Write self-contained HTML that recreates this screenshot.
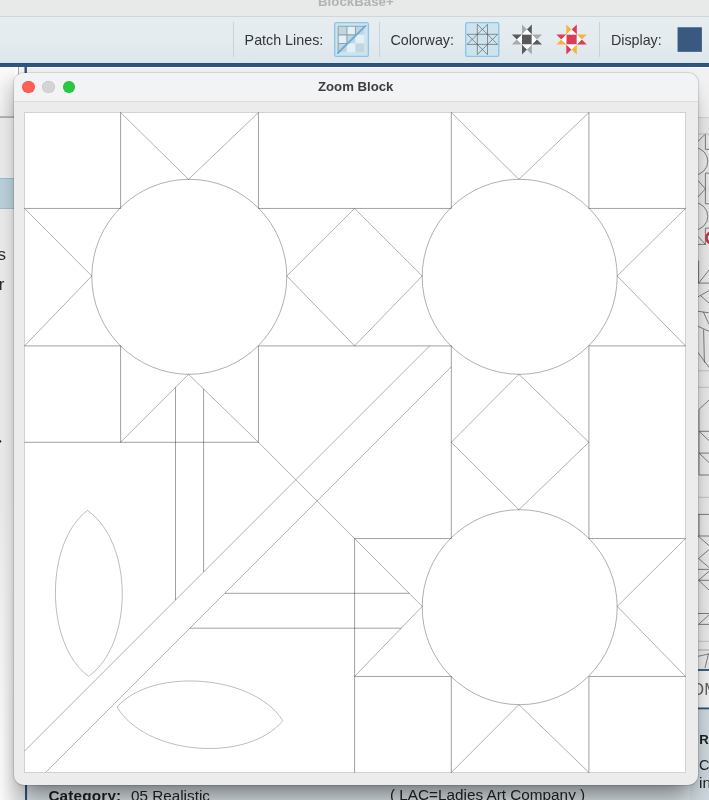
<!DOCTYPE html>
<html><head><meta charset="utf-8"><title>Zoom Block</title>
<style>
*{box-sizing:border-box;margin:0;padding:0}
html,body{width:709px;height:800px;overflow:hidden;background:#ececec;font-family:"Liberation Sans",sans-serif;color:#333}
.abs{position:absolute}
#titlestrip{left:0;top:0;width:709px;height:16px;background:#e8e9e9}
#apptitle{left:318px;top:-6.2px;font-size:13.3px;font-weight:bold;color:#b3b3b3;white-space:nowrap;line-height:15px}
#toolbar{left:0;top:16px;width:709px;height:47px;background:linear-gradient(#e6edf1,#e3ebef 55%,#dde6eb);border-top:1px solid #d1d6db}
#blueline{left:0;top:63px;width:709px;height:4px;background:linear-gradient(#284d75,#2f567f 40%)}
.sep{width:1px;top:22.3px;height:34.4px;background:#ccd3d8}
.lbl{font-size:14.3px;color:#353535;white-space:nowrap;line-height:16px;top:32.3px}
.btn{top:22.1px;width:34.8px;height:34.9px;border:1px solid #8cc3e8;background:#cde4ef;border-radius:1.5px}
#under{left:0;top:66.8px;width:709px;height:733.2px;background:#ededed}
#win{left:14px;top:73px;width:684px;height:711.5px;border-radius:10px;background:#ececec;box-shadow:0 0 0 1px rgba(0,0,0,0.10),0 1px 6px rgba(0,0,0,0.08),0 18px 25px -8px rgba(0,0,0,0.46);overflow:hidden}
#tbar{left:0;top:0;width:100%;height:29px;background:#f2f3f4;border-bottom:1px solid #dedede}
#wtitle{left:0;top:5.7px;width:100%;text-align:center;font-size:13.2px;font-weight:bold;color:#3d3d3d;line-height:15px;padding-right:0.6px}
.tl{top:7.7px;width:12.6px;height:12.6px;border-radius:50%}
#canvas{left:24px;top:112px;width:662px;height:661px;background:#fff;border:1px solid #d2d2d2}
svg.full{position:absolute;left:0;top:0;width:709px;height:800px;overflow:visible}
</style></head>
<body><div id="root" style="position:absolute;left:0;top:0;width:709px;height:800px;overflow:hidden;will-change:transform">
<div class="abs" id="titlestrip"></div>
<div class="abs" id="apptitle">BlockBase+</div>
<div class="abs" id="toolbar"></div>
<div class="abs sep" style="left:233.2px"></div>
<div class="abs lbl" style="left:244.6px">Patch Lines:</div>
<div class="abs sep" style="left:379.1px"></div>
<div class="abs lbl" style="left:390.4px">Colorway:</div>
<div class="abs sep" style="left:599.4px"></div>
<div class="abs lbl" style="left:610.9px">Display:</div>
<svg class="full" viewBox="0 0 709 800">
<rect x="334.7" y="22.7" width="33.7" height="33.7" rx="1.6" fill="#cde4ef" stroke="#8cc3e8" stroke-width="1.3"/>
<rect x="465.7" y="22.7" width="33.1" height="33.7" rx="1.6" fill="#cde4ef" stroke="#8cc3e8" stroke-width="1.3"/>
<rect x="338.2" y="26.2" width="8.7" height="8.7" fill="#c3d6dd"/>
<rect x="346.9" y="26.2" width="8.6" height="8.7" fill="#e2f1f7"/>
<rect x="355.5" y="26.2" width="8.7" height="8.7" fill="#c3d6dd"/>
<rect x="338.2" y="34.9" width="8.7" height="8.6" fill="#e2f1f7"/>
<rect x="346.9" y="34.9" width="8.6" height="8.6" fill="#c3d6dd"/>
<rect x="355.5" y="34.9" width="8.7" height="8.6" fill="#e2f1f7"/>
<rect x="338.2" y="43.5" width="8.7" height="8.7" fill="#c3d6dd"/>
<rect x="346.9" y="43.5" width="8.6" height="8.7" fill="#e2f1f7"/>
<rect x="355.5" y="43.5" width="8.7" height="8.7" fill="#c3d6dd"/>
<clipPath id="ul"><path d="M336 24H366.5L336 54.5Z"/></clipPath>
<path clip-path="url(#ul)" d="M338.2 26.2V52.2M346.9 26.2V52.2M355.5 26.2V52.2M338.2 26.2H364.2M338.2 34.9H364.2M338.2 43.5H364.2" stroke="#93a3aa" stroke-width="1.1" fill="none"/>
<path d="M337.9 53L365.5 25.9" stroke="#69ace0" stroke-width="1.9" stroke-linecap="round" fill="none"/>
<path d="M477.3 24.3V54.6M487.5 24.3V54.6M467.1 34.3H497.6M467.1 44.4H497.6M487.5 24.3L467.1 44.4M477.3 24.3L497.6 44.4M467.1 34.3L487.5 54.6M497.6 34.3L477.3 54.6" stroke="#4f4f4f" stroke-opacity="0.85" stroke-width="0.7" fill="none"/>
<rect x="522" y="34.4" width="9.8" height="10" fill="#58595b"/><path d="M522 24.5L522 34.4L526.9 29.45Z" fill="#a7a9ac"/><path d="M531.8 24.5L531.8 34.4L526.9 29.45Z" fill="#58595b"/><path d="M522 34.4L531.8 34.4L526.9 29.45Z" fill="#ffffff"/><path d="M511.8 34.4L522 34.4L516.9 39.4Z" fill="#58595b"/><path d="M511.8 44.4L522 44.4L516.9 39.4Z" fill="#a7a9ac"/><path d="M522 34.4L522 44.4L516.9 39.4Z" fill="#ffffff"/><path d="M531.8 34.4L542 34.4L536.9 39.4Z" fill="#a7a9ac"/><path d="M531.8 44.4L542 44.4L536.9 39.4Z" fill="#58595b"/><path d="M531.8 34.4L531.8 44.4L536.9 39.4Z" fill="#ffffff"/><path d="M522 44.4L522 54.5L526.9 49.45Z" fill="#58595b"/><path d="M531.8 44.4L531.8 54.5L526.9 49.45Z" fill="#a7a9ac"/><path d="M522 44.4L531.8 44.4L526.9 49.45Z" fill="#ffffff"/>
<rect x="566.3" y="34.4" width="10.5" height="10" fill="#dc3d55"/><path d="M566.3 24.5L566.3 34.4L571.55 29.45Z" fill="#f9b23c"/><path d="M576.8 24.5L576.8 34.4L571.55 29.45Z" fill="#dc3d55"/><path d="M566.3 34.4L576.8 34.4L571.55 29.45Z" fill="#ffffff"/><path d="M556.3 34.4L566.3 34.4L561.3 39.4Z" fill="#dc3d55"/><path d="M556.3 44.4L566.3 44.4L561.3 39.4Z" fill="#f9b23c"/><path d="M566.3 34.4L566.3 44.4L561.3 39.4Z" fill="#ffffff"/><path d="M576.8 34.4L586.8 34.4L581.8 39.4Z" fill="#f9b23c"/><path d="M576.8 44.4L586.8 44.4L581.8 39.4Z" fill="#dc3d55"/><path d="M576.8 34.4L576.8 44.4L581.8 39.4Z" fill="#ffffff"/><path d="M566.3 44.4L566.3 54.6L571.55 49.5Z" fill="#dc3d55"/><path d="M576.8 44.4L576.8 54.6L571.55 49.5Z" fill="#f9b23c"/><path d="M566.3 44.4L576.8 44.4L571.55 49.5Z" fill="#ffffff"/>
<rect x="677.55" y="27.25" width="24.35" height="24.6" fill="#3a5980"/>
</svg>
<div class="abs" id="under"></div>
<svg class="full" viewBox="0 0 709 800" font-family="Liberation Sans, sans-serif">
<defs><linearGradient id="pv" x1="0" y1="0" x2="0" y2="1"><stop offset="0" stop-color="#fdfdfd"/><stop offset="0.4" stop-color="#f3f3f3"/><stop offset="1" stop-color="#f0f0f0"/></linearGradient><linearGradient id="ph" x1="0" y1="0" x2="1" y2="0"><stop offset="0" stop-color="#000" stop-opacity="0"/><stop offset="0.45" stop-color="#000" stop-opacity="0.035"/><stop offset="1" stop-color="#000" stop-opacity="0.085"/></linearGradient><linearGradient id="pm" x1="0" y1="0" x2="0" y2="1"><stop offset="0" stop-color="#fff" stop-opacity="0"/><stop offset="0.5" stop-color="#fff" stop-opacity="1"/></linearGradient><mask id="mk"><rect x="0" y="66.8" width="18.3" height="49.6" fill="url(#pm)"/></mask></defs>
<rect x="0" y="66.8" width="18.3" height="49.6" fill="url(#pv)"/>
<rect x="0" y="66.8" width="14.3" height="49.6" fill="url(#ph)" mask="url(#mk)"/>
<rect x="18.2" y="66.8" width="0.9" height="8" fill="#9a9a9a"/>
<rect x="19.1" y="66.8" width="5.4" height="8" fill="#f4f4f4"/>
<rect x="27" y="67" width="682" height="1" fill="#fcfcfc"/>
<rect x="27" y="68" width="682" height="8" fill="#f1f1f1"/>
<rect x="24.5" y="64" width="2.4" height="10" fill="#2e517b"/>
<rect x="0" y="116.4" width="20" height="1.4" fill="#969696"/>
<defs><linearGradient id="lv" gradientUnits="userSpaceOnUse" x1="0" y1="500" x2="0" y2="740"><stop offset="0" stop-color="#ececec"/><stop offset="1" stop-color="#fafafa"/></linearGradient><linearGradient id="lh" gradientUnits="userSpaceOnUse" x1="0" y1="0" x2="25" y2="0"><stop offset="0" stop-color="#000" stop-opacity="0.0"/><stop offset="0.56" stop-color="#000" stop-opacity="0.075"/><stop offset="1" stop-color="#000" stop-opacity="0.10"/></linearGradient><linearGradient id="lm" gradientUnits="userSpaceOnUse" x1="0" y1="500" x2="0" y2="740"><stop offset="0" stop-color="#fff" stop-opacity="0"/><stop offset="1" stop-color="#fff" stop-opacity="1"/></linearGradient><mask id="mk2"><rect x="0" y="500" width="25" height="300" fill="url(#lm)"/></mask></defs>
<rect x="0" y="117.9" width="25" height="682.1" fill="url(#lv)"/>
<rect x="0" y="178" width="20" height="31" fill="#bbd1db"/>
<rect x="0" y="178" width="20" height="0.9" fill="#98bbd4"/>
<rect x="0" y="208.1" width="20" height="0.9" fill="#98bbd4"/>
<rect x="0" y="500" width="25" height="300" fill="url(#lh)" mask="url(#mk2)"/>
<text x="5.9" y="259.6" font-size="17" text-anchor="end" fill="#2a2a2a">s</text>
<text x="4.4" y="289.8" font-size="17" text-anchor="end" fill="#2a2a2a">r</text>
<circle cx="-0.2" cy="441.3" r="1.4" fill="#1a1a1a"/>
<rect x="27.1" y="780" width="671" height="20" fill="#d7dfe4"/>
<rect x="25" y="780" width="2.1" height="20" fill="#2e517b"/>
<text x="48.4" y="801.4" font-size="15.3" font-weight="bold" fill="#1e1e1e" letter-spacing="0.17">Category:</text>
<text x="130.9" y="801.4" font-size="15.3" fill="#222">05 Realistic</text>
<text x="390" y="799.8" font-size="15.3" fill="#222">( LAC=Ladies Art Company )</text>
<rect x="690" y="74.8" width="19" height="42.7" fill="#f1f1f1"/>
<rect x="690" y="117.1" width="19" height="0.8" fill="#c6c6c6"/>
<rect x="690" y="117.9" width="19" height="552" fill="#e8e8e8"/>
<path d="M698 141.3L705.4 134M705.4 134L705.4 149.4M705.4 149.4L709 149.4M705.4 173.1L709 173.1M705.4 173.1L705.4 203.8M705.4 203.8L709 203.8M698 180.6L705.4 188.8M705.4 188.8L698 196.9M705.4 228.1L709 228.1M705.4 228.1L705.4 244.4M698 236.3L705.4 244.4M698 244.4L706 244.4M698.6 260.6L698.6 283.1M698 283.1L709 283.1M698.6 283.1L709 270M698 296.9L709 290.6M700.5 295.6L709 303.1M698 311.3L709 312.8M703.4 311.9L709 324.4M698 326.3L709 331.3M703.6 329.4L704.4 362.5M698 352.5L709 367.5M709 400L699 409.4M699 409.4L699 475M699 431.3L709 431.3M699 431.3L709 440.6M699 453.1L709 453.1M699 453.1L709 462.5M699 475L709 475M698 514.4L709 514.4M699 514.4L699 536M698 536L709 536M698 536L709 545.6M709 549.6L698.5 558.5M698.5 558.5L709 567.5M698 569.4L709 569.4M709 571.3L698.5 580.3M698.5 580.3L709 580.3M698.5 580.3L709 590M698 613.5L709 613.5M709 615L698.5 624.4M698.5 624.4L709 624.4M708.4 654L705 668" stroke="#4d4d4d" stroke-width="0.7" fill="none"/>
<path d="M698 656.3Q704 655.2 709 653.7" stroke="#4d4d4d" stroke-width="0.7" fill="none"/>
<circle cx="694.1" cy="161.3" r="13.7" stroke="#4d4d4d" stroke-width="0.7" fill="none"/>
<circle cx="694.1" cy="216.3" r="13.7" stroke="#4d4d4d" stroke-width="0.7" fill="none"/>
<circle cx="712" cy="237.8" r="5.6" stroke="#c5304d" stroke-width="2.6" fill="none"/>
<rect x="698" y="133.55" width="11" height="0.9" fill="#bdbdbd"/>
<rect x="698" y="370.35" width="11" height="0.9" fill="#bdbdbd"/>
<rect x="698" y="386.85" width="11" height="0.9" fill="#bdbdbd"/>
<rect x="698" y="496.85" width="11" height="0.9" fill="#bdbdbd"/>
<rect x="698" y="640.8499999999999" width="11" height="0.9" fill="#bdbdbd"/>
<rect x="698" y="649.5" width="11" height="1" fill="#a8a8a8"/>
<rect x="690" y="670" width="19" height="39" fill="#f0f0f0"/>
<rect x="690" y="669.1" width="19" height="1.8" fill="#2e517b"/>
<rect x="690" y="707.5" width="19" height="2.1" fill="#2e517b"/>
<rect x="690" y="709.6" width="19" height="90.4" fill="#cdd7dd"/>
<text x="691.3" y="695" font-size="16.5" fill="#5e5e5e">OM</text>
<text x="699.3" y="744.3" font-size="13.2" font-weight="bold" fill="#1e1e1e">R</text>
<text x="698.9" y="769.5" font-size="14.5" fill="#222">C</text>
<text x="699" y="787.8" font-size="15.3" fill="#222">in</text>
</svg>
<div class="abs" id="blueline"></div>
<div class="abs" id="win">
  <div class="abs" id="tbar"></div>
  <div class="abs" id="wtitle">Zoom Block</div>
  <div class="abs tl" style="left:8.1px;background:#fe5f57;box-shadow:inset 0 0 0 0.5px rgba(0,0,0,0.12)"></div>
  <div class="abs tl" style="left:28.3px;background:#d4d4d4;box-shadow:inset 0 0 0 0.5px rgba(0,0,0,0.10)"></div>
  <div class="abs tl" style="left:48.6px;background:#28c840;box-shadow:inset 0 0 0 0.5px rgba(0,0,0,0.12)"></div>
</div>
<div class="abs" id="canvas"></div>
<svg class="full" viewBox="0 0 709 800" fill="none" stroke="#000" stroke-opacity="0.7" stroke-width="0.5">
<style>.hv{stroke-opacity:.74}.dg{stroke-opacity:.62}.lf{stroke-opacity:.52}</style>
<path class="hv" d="M120.6 112.5L120.6 208.45 M120.6 345.9L120.6 442.3 M258.45 112.5L258.45 208.45 M258.45 345.9L258.45 442.3 M451.3 112.5L451.3 208.45 M451.3 345.9L451.3 538.55 M451.3 676.45L451.3 772.5 M588.9 112.5L588.9 208.45 M588.9 345.9L588.9 538.55 M588.9 676.45L588.9 772.5 M354.6 538.55L354.6 772.5 M24.5 208.45L120.6 208.45 M258.45 208.45L451.3 208.45 M588.9 208.45L685.5 208.45 M24.5 345.9L120.6 345.9 M258.45 345.9L451.3 345.9 M588.9 345.9L685.5 345.9 M24.5 442.3L258.45 442.3 M354.6 538.55L451.3 538.55 M588.9 538.55L685.5 538.55 M354.6 676.45L451.3 676.45 M588.9 676.45L685.5 676.45 M175.5 387.32L175.5 600.1 M203.6 388.98L203.6 572 M224.8 593.3L409.15 593.3 M189.9 628.2L401.16 628.2"/><path class="dg" d="M120.6 112.5L188.5 179.3 M188.5 179.3L258.45 112.5 M120.6 442.3L188.5 374.3 M188.5 374.3L258.45 442.3 M24.5 208.45L91.8 276 M91.8 276L24.5 345.9 M354.6 208.45L286.8 276 M286.8 276L354.6 345.9 M451.3 112.5L518.9 179.3 M518.9 179.3L588.9 112.5 M451.3 442.3L518.9 374.3 M518.9 374.3L588.9 442.3 M354.6 208.45L422.2 276 M422.2 276L354.6 345.9 M685.5 208.45L617.2 276 M617.2 276L685.5 345.9 M451.3 442.3L518.9 509.7 M518.9 509.7L588.9 442.3 M451.3 772.5L518.9 704.7 M518.9 704.7L588.9 772.5 M354.6 538.55L422.2 606.4 M422.2 606.4L354.6 676.45 M685.5 538.55L617.2 606.4 M617.2 606.4L685.5 676.45 M429.7 345.9L24.5 751.1 M451.3 366.8L45.6 772.5 M258.45 442.3L354.6 538.55"/><g class="dg"><circle cx="189.3" cy="276.8" r="97.5"/><circle cx="519.7" cy="276.8" r="97.5"/><circle cx="519.7" cy="607.2" r="97.5"/></g><path class="lf" d="M87.5 510.5C44.21 542.79 44.89 644.59 88.6 676.3C133.99 644 133.31 542.2 87.5 510.5Z"/><path class="lf" d="M117.1 707C145.23 755.18 247.14 763.61 282.8 720.7C254.48 674.91 152.56 666.48 117.1 707Z"/>
</svg>
</div></body></html>
